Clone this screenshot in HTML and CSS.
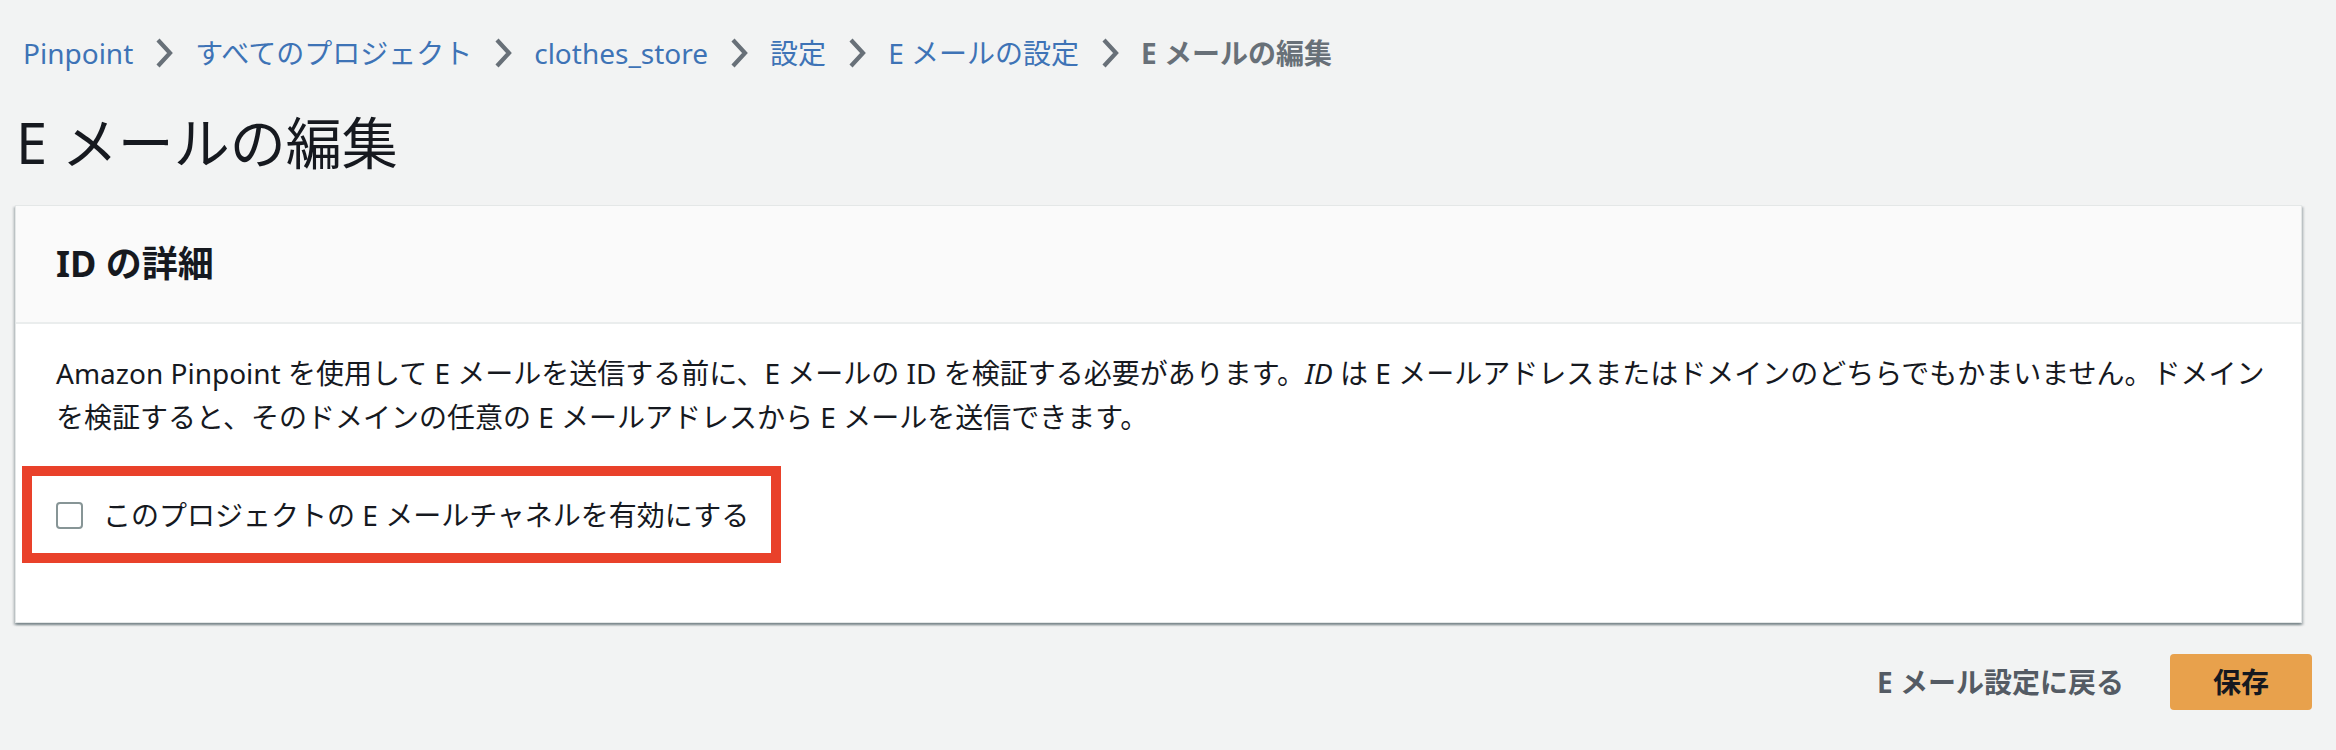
FILE: index.html
```html
<!DOCTYPE html>
<html lang="ja">
<head>
<meta charset="utf-8">
<title>E メールの編集</title>
<link rel="stylesheet" href="styles.css">
</head>
<body>
<nav class="breadcrumbs">
  <a class="crumb" href="#">Pinpoint</a>
  <span class="sep"><svg width="18" height="30" viewBox="0 0 18 30"><polyline points="3,2 15,15 3,28" fill="none" stroke="#687078" stroke-width="4.2"/></svg></span>
  <a class="crumb" href="#">すべてのプロジェクト</a>
  <span class="sep"><svg width="18" height="30" viewBox="0 0 18 30"><polyline points="3,2 15,15 3,28" fill="none" stroke="#687078" stroke-width="4.2"/></svg></span>
  <a class="crumb" href="#">clothes_store</a>
  <span class="sep"><svg width="18" height="30" viewBox="0 0 18 30"><polyline points="3,2 15,15 3,28" fill="none" stroke="#687078" stroke-width="4.2"/></svg></span>
  <a class="crumb" href="#">設定</a>
  <span class="sep"><svg width="18" height="30" viewBox="0 0 18 30"><polyline points="3,2 15,15 3,28" fill="none" stroke="#687078" stroke-width="4.2"/></svg></span>
  <a class="crumb" href="#">E メールの設定</a>
  <span class="sep"><svg width="18" height="30" viewBox="0 0 18 30"><polyline points="3,2 15,15 3,28" fill="none" stroke="#687078" stroke-width="4.2"/></svg></span>
  <span class="crumb current">E メールの編集</span>
</nav>
<h1 class="page-title">E メールの編集</h1>
<section class="panel">
  <header class="panel-header"><h2>ID の詳細</h2></header>
  <div class="panel-body">
    <p class="desc">Amazon Pinpoint を使用して E メールを送信する前に、E メールの ID を検証する必要があります。<i>ID</i> は E メールアドレスまたはドメインのどちらでもかまいません。ドメイン<br>を検証すると、そのドメインの任意の E メールアドレスから E メールを送信できます。</p>
    <div class="highlight">
      <label class="check"><span class="box"></span><span class="check-label">このプロジェクトの E メールチャネルを有効にする</span></label>
    </div>
  </div>
</section>
<div class="actions">
  <button class="btn-link" type="button">E メール設定に戻る</button>
  <button class="btn-primary" type="button">保存</button>
</div>
</body>
</html>
```

FILE: styles.css
```css
html, body {
  margin: 0;
  padding: 0;
  background: #f2f3f3;
  font-family: "Noto Sans", "Noto Sans CJK JP", sans-serif;
  color: #16191f;
}

.breadcrumbs {
  display: flex;
  align-items: center;
  height: 44px;
  padding: 31px 0 0 23px;
  font-size: 28px;
  line-height: 44px;
  white-space: nowrap;
}

.crumb {
  color: #3e73b6;
  text-decoration: none;
}

.crumb.current {
  color: #687078;
  font-weight: 700;
}

.sep {
  display: flex;
  align-items: center;
  margin: 0 22px;
}

.page-title {
  margin: 31px 0 0 16px;
  font-size: 56px;
  line-height: 72px;
  font-weight: 400;
  color: #16191f;
}

.panel {
  margin: 27px 34px 0 15px;
  background: #ffffff;
  border: 1px solid #e4e7e7;
  box-shadow: 0 2px 2px rgba(0, 28, 36, 0.3), 2px 2px 2px rgba(0, 28, 36, 0.15), -2px 2px 2px rgba(0, 28, 36, 0.15);
}

.panel-header {
  background: #fafafa;
  padding: 36px 40px;
  border-bottom: 2px solid #eaeded;
}

.panel-header h2 {
  margin: 0;
  font-size: 36px;
  line-height: 44px;
  font-weight: 700;
}

.panel-body {
  padding: 27px 40px 59px;
}

.desc {
  margin: 0;
  font-size: 28px;
  line-height: 44px;
  white-space: nowrap;
}

.highlight {
  display: flex;
  width: fit-content;
  margin: 27px 0 0 -34px;
  border: 10px solid #e9412a;
  padding: 0 22px 0 24px;
  height: 77px;
  align-items: center;
}

.check {
  display: flex;
  align-items: center;
  gap: 20px;
  font-size: 28px;
  line-height: 44px;
}

.box {
  width: 23px;
  height: 23px;
  border: 2px solid #879596;
  border-radius: 4px;
  background: #fff;
  margin-top: 2px;
}

.actions {
  display: flex;
  justify-content: flex-end;
  align-items: center;
  gap: 6px;
  margin-top: 31px;
  padding-right: 24px;
}

.btn-link {
  background: none;
  border: 0;
  padding: 0 40px;
  font-family: inherit;
  font-size: 28px;
  line-height: 44px;
  font-weight: 700;
  color: #545b64;
}

.btn-primary {
  background: #e8a14c;
  border: 0;
  border-radius: 4px;
  height: 56px;
  padding: 0 43px;
  font-family: inherit;
  font-size: 28px;
  line-height: 44px;
  font-weight: 700;
  color: #16191f;
}
```
